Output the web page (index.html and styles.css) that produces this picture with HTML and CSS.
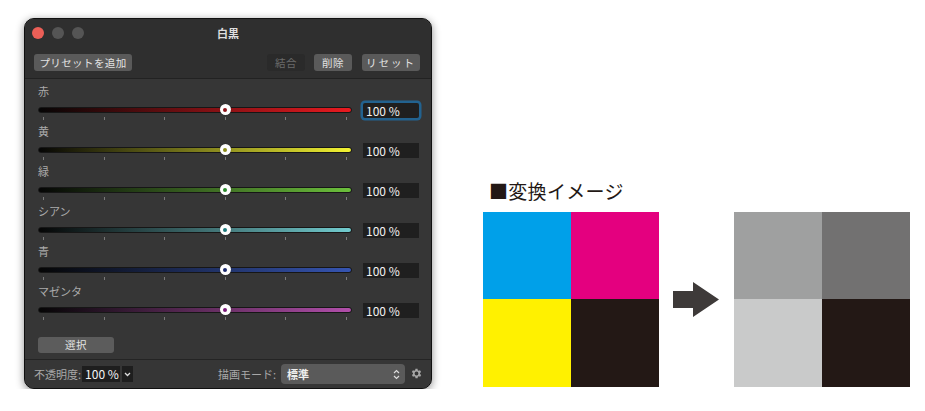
FILE: index.html
```html
<!DOCTYPE html>
<html lang="ja">
<head>
<meta charset="utf-8">
<title>白黒</title>
<link rel="stylesheet" href="styles.css">
</head>
<body>
<div class="page">
  <div class="window">
    <div class="titlebar">
      <div class="lights"><span class="light red"></span><span class="light"></span><span class="light"></span></div>
      <div class="title">白黒</div>
    </div>
    <div class="toolbar">
      <button class="btn btn-preset">プリセットを追加</button>
      <span class="spacer"></span>
      <button class="btn btn-merge" disabled>結合</button>
      <button class="btn btn-del">削除</button>
      <button class="btn btn-reset">リセット</button>
    </div>
    <div class="content">
      <div class="rows">
        <div class="row c-red">
          <div class="label">赤</div>
          <div class="sline">
            <div class="slider"><div class="track"></div><div class="ticks"><i></i><i></i><i></i><i></i><i></i><i></i></div><div class="thumb"><b></b></div></div>
            <div class="val focus">100 %</div>
          </div>
        </div>
        <div class="row c-yellow">
          <div class="label">黄</div>
          <div class="sline">
            <div class="slider"><div class="track"></div><div class="ticks"><i></i><i></i><i></i><i></i><i></i><i></i></div><div class="thumb"><b></b></div></div>
            <div class="val">100 %</div>
          </div>
        </div>
        <div class="row c-green">
          <div class="label">緑</div>
          <div class="sline">
            <div class="slider"><div class="track"></div><div class="ticks"><i></i><i></i><i></i><i></i><i></i><i></i></div><div class="thumb"><b></b></div></div>
            <div class="val">100 %</div>
          </div>
        </div>
        <div class="row c-cyan">
          <div class="label">シアン</div>
          <div class="sline">
            <div class="slider"><div class="track"></div><div class="ticks"><i></i><i></i><i></i><i></i><i></i><i></i></div><div class="thumb"><b></b></div></div>
            <div class="val">100 %</div>
          </div>
        </div>
        <div class="row c-blue">
          <div class="label">青</div>
          <div class="sline">
            <div class="slider"><div class="track"></div><div class="ticks"><i></i><i></i><i></i><i></i><i></i><i></i></div><div class="thumb"><b></b></div></div>
            <div class="val">100 %</div>
          </div>
        </div>
        <div class="row c-magenta">
          <div class="label">マゼンタ</div>
          <div class="sline">
            <div class="slider"><div class="track"></div><div class="ticks"><i></i><i></i><i></i><i></i><i></i><i></i></div><div class="thumb"><b></b></div></div>
            <div class="val">100 %</div>
          </div>
        </div>
      </div>
      <button class="btn btn-select">選択</button>
    </div>
    <div class="bottombar">
      <span class="blabel">不透明度:</span>
      <span class="obox">100 %</span>
      <span class="chev"><svg width="7" height="5" viewBox="0 0 7 5"><path d="M1 1l2.5 2.5L6 1" fill="none" stroke="#ddd" stroke-width="1.3"/></svg></span>
      <span class="spacer"></span>
      <span class="blabel mode">描画モード:</span>
      <span class="popup"><span class="ptext">標準</span><svg class="updown" width="7" height="11" viewBox="0 0 7 11"><path d="M1 4l2.5-2.5L6 4M1 7l2.5 2.5L6 7" fill="none" stroke="#ddd" stroke-width="1.2"/></svg></span>
      <svg class="gear" width="13" height="13" viewBox="0 0 24 24"><path fill="#a6a6a6" d="M19.4 13a7.5 7.5 0 0 0 0-2l2.1-1.6-2-3.5-2.5 1a7.6 7.6 0 0 0-1.7-1L15 3.2h-4l-.4 2.7a7.6 7.6 0 0 0-1.7 1l-2.5-1-2 3.5L6.6 11a7.5 7.5 0 0 0 0 2l-2.1 1.6 2 3.5 2.5-1a7.6 7.6 0 0 0 1.7 1l.4 2.7h4l.4-2.7a7.6 7.6 0 0 0 1.7-1l2.5 1 2-3.5zM13 15.5a3.5 3.5 0 1 1 0-7 3.5 3.5 0 0 1 0 7z" transform="translate(-1 0)"/></svg>
    </div>
  </div>

  <div class="figure">
    <div class="heading">■変換イメージ</div>
    <div class="imgs">
      <div class="quad">
        <span class="q cyan"></span><span class="q magenta"></span>
        <span class="q yellow"></span><span class="q black"></span>
      </div>
      <svg class="arrow" width="46" height="35" viewBox="0 0 46 35"><path d="M0 9h20V0l26 17.5L20 35v-9H0z" fill="#3e3a39"/></svg>
      <div class="quad">
        <span class="q g1"></span><span class="q g2"></span>
        <span class="q g3"></span><span class="q black"></span>
      </div>
    </div>
  </div>
</div>
</body>
</html>
```

FILE: styles.css
```css
* { box-sizing: border-box; }
body {
  margin: 0;
  background: #fff;
  font-family: "Noto Sans CJK JP", "Noto Sans", sans-serif;
}
.page {
  display: flex;
  align-items: flex-start;
  padding: 18px 0 0 24px;
}
.window {
  width: 408px;
  height: 371px;
  border: 1px solid #101010;
  border-radius: 10px;
  background: #363636;
  box-shadow: inset 0 0 0 1px rgba(255,255,255,0.13), 0 2px 8px rgba(0,0,0,0.45);
  overflow: hidden;
  display: flex;
  flex-direction: column;
}
.titlebar {
  height: 29px;
  background: #2f2f2f;
  display: grid;
  grid-template-columns: 1fr auto 1fr;
  align-items: start;
  padding: 8px 0 0 7px;
}
.lights { display: flex; gap: 8px; }
.light {
  width: 12px; height: 12px; border-radius: 50%;
  background: #555555;
}
.light.red { background: #ec5f57; }
.title {
  color: #dedede;
  font-size: 11px;
  font-weight: 700;
  line-height: 12px;
  margin-left: -7px;
}
.toolbar {
  background: #2f2f2f;
  display: flex;
  align-items: flex-start;
  padding: 6px 11px 7px 9px;
  border-bottom: 1px solid #222;
  height: 31px;
}
.spacer { flex: 1; }
.btn {
  font-family: inherit;
  border: none;
  border-radius: 3px;
  background: #5a5a5a;
  color: #e2e2e2;
  font-size: 10.5px;
  height: 17px;
  line-height: 17px;
  padding: 0;
  letter-spacing: 0.4px;
}
.btn-preset { width: 98px; }
.btn-merge { width: 38px; background: #2a2a2a; color: #6a6a6a; }
.btn-del { width: 38px; margin-left: 9px; }
.btn-reset { width: 58px; margin-left: 10px; letter-spacing: 2px; }
.content {
  flex: 1;
  background: #363636;
  padding: 5px 12px 5px 13px;
  display: flex;
  flex-direction: column;
}
.rows { display: flex; flex-direction: column; gap: 4px; }
.row { height: 36px; }
.label {
  height: 16px;
  font-size: 11px;
  line-height: 14px;
  color: #ababab;
}
.sline {
  height: 20px;
  display: flex;
  align-items: center;
  gap: 11px;
}
.slider {
  position: relative;
  width: 314px;
  height: 20px;
}
.track {
  position: absolute;
  left: 0; right: 0; top: 7px;
  height: 6px;
  border-radius: 3px;
  border: 1px solid #161616;
  background: linear-gradient(to right, #050505, var(--c));
}
.ticks {
  position: absolute;
  left: 5px; right: 5px; top: 17px;
  height: 3px;
  display: flex;
  justify-content: space-between;
}
.ticks i { width: 1px; height: 3px; background: #7a7a7a; }
.thumb {
  position: absolute;
  left: 59.6%;
  top: 4px;
  width: 11px; height: 11px;
  margin-left: -5.5px;
  border-radius: 50%;
  background: #fff;
  box-shadow: 0 0 1px rgba(0,0,0,0.6);
  display: flex;
  align-items: center;
  justify-content: center;
}
.thumb b {
  width: 4px; height: 4px; border-radius: 50%;
  background: var(--d);
}
.c-red { --c: #ea1a20; --d: #8c1419; }
.c-yellow { --c: #f2f232; --d: #8c8c1c; }
.c-green { --c: #6cc03c; --d: #2c8a2c; }
.c-cyan { --c: #72cccf; --d: #1f7a7c; }
.c-blue { --c: #3655b2; --d: #1c2a6c; }
.c-magenta { --c: #b24fab; --d: #7a1a78; }
.val {
  width: 56px;
  height: 15px;
  background: #1f1f1f;
  color: #f2f2f2;
  font-size: 12px;
  line-height: 15px;
  padding-left: 3px;
}
.val.focus {
  border-radius: 2px;
  box-shadow: 0 0 0 2.5px #22628f;
}
.btn-select {
  margin-top: 17px;
  width: 76px;
  height: 16px;
  line-height: 16px;
  background: #5c5c5c;
}
.bottombar {
  height: 29px;
  border-top: 1px solid #242424;
  display: flex;
  align-items: center;
  padding: 0 8px 0 9px;
  background: #363636;
}
.blabel { font-size: 11px; color: #a8a8a8; }
.obox {
  margin-left: 1px;
  width: 38px;
  height: 16px;
  background: #1e1e1e;
  color: #f4f4f4;
  font-size: 12px;
  line-height: 16px;
  padding-left: 3px;
}
.chev {
  margin-left: 2px;
  width: 11px; height: 16px;
  background: #1e1e1e;
  display: flex; align-items: center; justify-content: center;
}
.mode { margin-right: 5px; }
.popup {
  width: 124px;
  height: 20px;
  background: #5a5a5a;
  border-radius: 4px;
  display: flex;
  align-items: center;
  padding: 0 5px 0 6px;
}
.ptext { flex: 1; font-size: 11px; font-weight: 700; color: #eee; }
.gear { margin-left: 5px; margin-top: -2px; }
.figure {
  margin-left: 51px;
  margin-top: 161px;
}
.heading {
  font-size: 19px;
  line-height: 24px;
  color: #231815;
  padding-left: 6px;
  letter-spacing: 0.3px;
}
.imgs {
  margin-top: 9px;
  display: flex;
  align-items: center;
}
.quad {
  width: 176px;
  height: 175px;
  display: grid;
  grid-template-columns: 88px 88px;
  grid-template-rows: 87px 88px;
}
.q.cyan { background: #00a0e9; }
.q.magenta { background: #e4007f; }
.q.yellow { background: #fff100; }
.q.black { background: #231815; }
.q.g1 { background: #9fa0a0; }
.q.g2 { background: #727171; }
.q.g3 { background: #c9caca; }
.arrow { margin: 0 15px 0 14px; }
```
